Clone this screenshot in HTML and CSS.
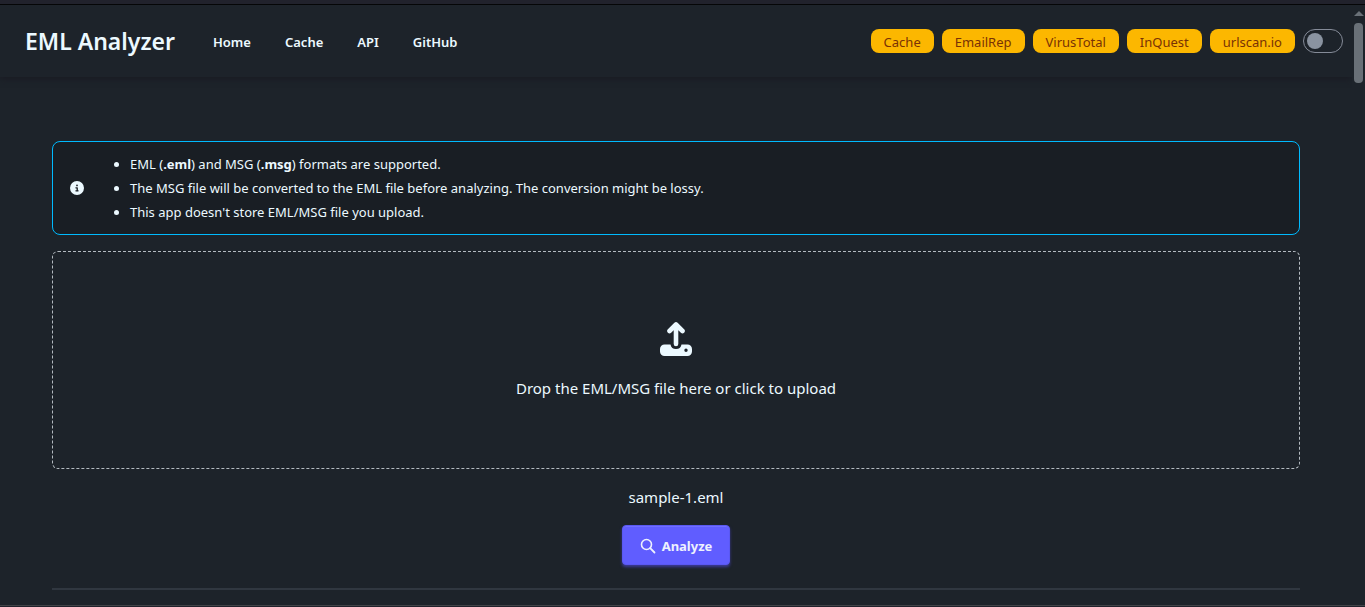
FILE: index.html
```html
<!DOCTYPE html>
<html lang="en">
<head>
<meta charset="utf-8">
<title>EML Analyzer</title>
<meta name="viewport" content="width=device-width, initial-scale=1">
<link rel="stylesheet" href="styles.css">
</head>
<body>
<div class="window">
  <div class="view">
    <div class="page">
      <header class="navbar">
        <a class="brand" href="#">EML Analyzer</a>
        <nav class="menu">
          <a href="#">Home</a>
          <a href="#">Cache</a>
          <a href="#">API</a>
          <a href="#">GitHub</a>
        </nav>
        <div class="status">
          <span class="badge">Cache</span>
          <span class="badge">EmailRep</span>
          <span class="badge">VirusTotal</span>
          <span class="badge">InQuest</span>
          <span class="badge">urlscan.io</span>
          <input class="toggle" type="checkbox" aria-label="Switch theme">
        </div>
      </header>
      <main class="container">
        <div class="alert" role="alert">
          <svg class="alert-icon" viewBox="0 0 512 512" aria-hidden="true"><path fill="currentColor" d="M256 512a256 256 0 1 0 0-512 256 256 0 1 0 0 512zM216 336h24v-64h-24c-13.300 0-24-10.700-24-24s10.700-24 24-24h48c13.300 0 24 10.700 24 24v88h8c13.300 0 24 10.700 24 24s-10.700 24-24 24h-80c-13.300 0-24-10.700-24-24s10.700-24 24-24zm40-208a32 32 0 1 1 0 64 32 32 0 1 1 0-64z"/></svg>
          <ul>
            <li>EML (<strong>.eml</strong>) and MSG (<strong>.msg</strong>) formats are supported.</li>
            <li>The MSG file will be converted to the EML file before analyzing. The conversion might be lossy.</li>
            <li>This app doesn't store EML/MSG file you upload.</li>
          </ul>
        </div>
        <button class="dropzone" type="button">
          <svg class="upload-icon" viewBox="0 0 32 34" aria-hidden="true">
            <path d="M16 22V3M9.500 9 16 2.500 22.500 9" fill="none" stroke="currentColor" stroke-width="4.600" stroke-linecap="round" stroke-linejoin="round"/>
            <path fill="currentColor" fill-rule="evenodd" d="M4.500 22.500h6a5.600 5.600 0 0 0 11 0h6A4.500 4.500 0 0 1 32 27v2.500a4.500 4.500 0 0 1-4.500 4.500h-23A4.500 4.500 0 0 1 0 29.500V27a4.500 4.500 0 0 1 4.500-4.500zM26 26.600a1.700 1.700 0 1 0 0 3.400 1.700 1.700 0 0 0 0-3.400z"/>
          </svg>
          <span>Drop the EML/MSG file here or click to upload</span>
        </button>
        <p class="filename">sample-1.eml</p>
        <button class="analyze" type="button">
          <svg class="search-icon" viewBox="0 0 16 16" aria-hidden="true"><circle cx="6.500" cy="6.500" r="5" fill="none" stroke="currentColor" stroke-width="1.600"/><path d="M10.200 10.200 14.500 14.500" stroke="currentColor" stroke-width="1.800" stroke-linecap="round"/></svg>
          Analyze
        </button>
        <hr class="divider">
      </main>
    </div>
    <div class="scrollbar" aria-hidden="true">
      <span class="scroll-arrow"></span>
      <span class="scroll-thumb"></span>
    </div>
  </div>
</div>
</body>
</html>
```

FILE: styles.css
```css
* {
  box-sizing: border-box;
}

body {
  margin: 0;
  background: #1d232a;
  color: #ecf9ff;
  font-family: "Noto Sans", "Open Sans", sans-serif;
  font-size: 16px;
  line-height: 24px;
}

a {
  color: inherit;
  text-decoration: none;
}

.window {
  display: flex;
  flex-direction: column;
  height: 100vh;
  border-top: 4px solid #21222c;
  border-bottom: 1px solid #21222c;
}

.view {
  display: flex;
  flex: 1;
  min-height: 0;
  border-top: 1px solid #050607;
  border-bottom: 1px solid #414347;
}

.page {
  flex: 1;
  min-width: 0;
  overflow: hidden;
}

.navbar {
  display: flex;
  align-items: center;
  min-height: 72px;
  padding: 0 9px 0 25px;
  box-shadow: 0 2px 6px #1a1b23;
}

.brand {
  font-size: 23px;
  font-weight: 600;
}

.menu {
  display: flex;
  gap: 34px;
  margin-left: 38px;
  padding-top: 2px;
  font-size: 13px;
  font-weight: 600;
}

.status {
  display: flex;
  align-items: center;
  gap: 8px;
  margin-left: auto;
}

.badge {
  height: 24px;
  padding: 1px 13px 0;
  border-radius: 8px;
  background: #fcb700;
  color: #793205;
  font-size: 13px;
}

.toggle {
  appearance: none;
  display: flex;
  width: 40px;
  height: 24px;
  margin: 0;
  padding: 3px;
  border: 1px solid #858b98;
  border-radius: 12px;
}

.toggle::before {
  content: "";
  width: 16px;
  height: 16px;
  border-radius: 50%;
  background: #8a93a0;
}

.toggle:checked {
  justify-content: flex-end;
}

.container {
  display: flex;
  flex-direction: column;
  align-items: center;
  max-width: 1280px;
  margin: 0 auto;
  padding: 64px 16px 16px;
}

.alert {
  display: flex;
  align-items: center;
  gap: 16px;
  width: 100%;
  padding: 10px 17px;
  border: 1px solid #00bafe;
  border-radius: 8px;
  background: #191e24;
  font-size: 13px;
}

.alert-icon {
  width: 14px;
  height: 14px;
}

.alert ul {
  margin: 0;
  padding-left: 30px;
}

.dropzone {
  display: flex;
  flex-direction: column;
  align-items: center;
  justify-content: center;
  gap: 20px;
  width: 100%;
  min-height: 218px;
  margin-top: 16px;
  padding: 2px 0 0;
  border: 1px dashed #b4bbc1;
  border-radius: 6px;
  background: none;
  color: inherit;
  font: inherit;
  font-size: 15px;
}

.upload-icon {
  width: 32px;
  height: 34px;
}

.filename {
  margin: 16px 0;
  font-size: 15px;
}

.analyze {
  display: flex;
  align-items: center;
  gap: 6px;
  height: 40px;
  padding: 1px 17px 0;
  border: 1px solid #5a58f2;
  border-radius: 4px;
  background: #605dff;
  box-shadow: inset 0 1px #706eff, 0 2px 3px #3c3b98;
  color: #edf1fe;
  font: inherit;
  font-size: 13px;
  font-weight: 700;
}

.search-icon {
  width: 16px;
  height: 16px;
}

.divider {
  width: 100%;
  height: 2px;
  margin: 23px 0 0;
  border: 0;
  background: #303740;
}

.scrollbar {
  display: flex;
  flex-direction: column;
  align-items: center;
  gap: 7px;
  width: 13px;
  padding-top: 6px;
}

.scroll-arrow {
  border: 5px solid transparent;
  border-top: 0;
  border-bottom-color: #697077;
}

.scroll-thumb {
  width: 9px;
  height: 60px;
  border-radius: 4px;
  background: #697077;
}
```
